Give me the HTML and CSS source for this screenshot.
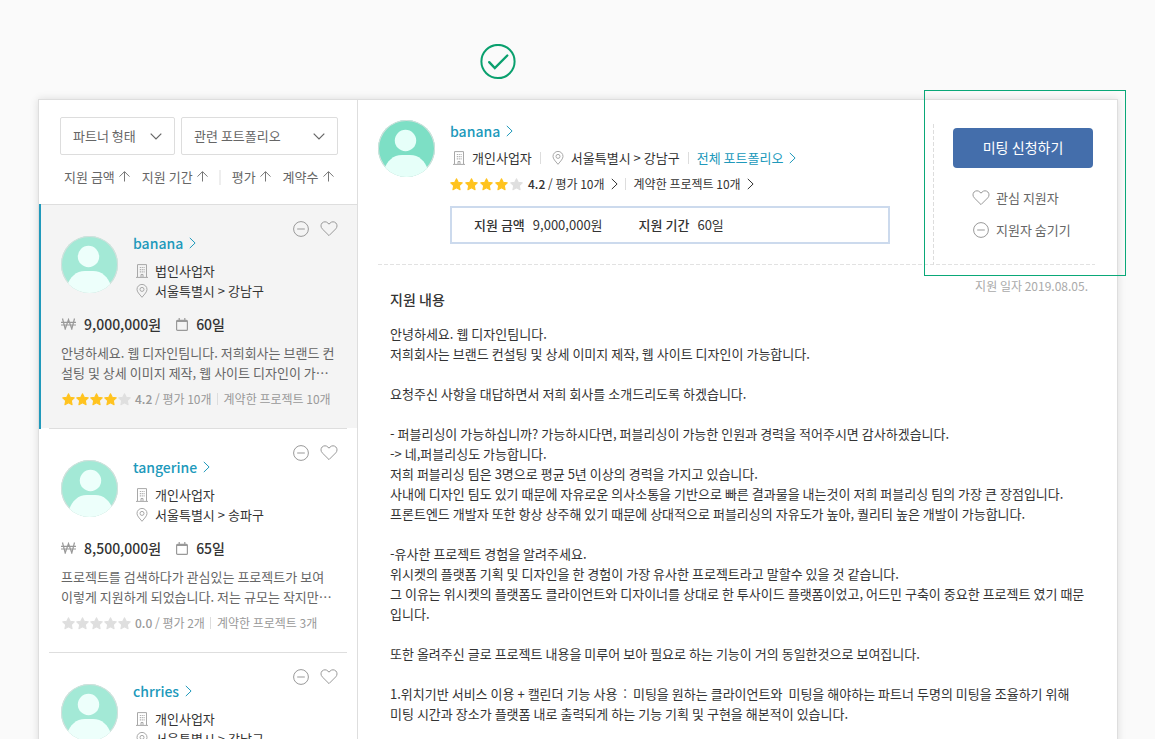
FILE: index.html
```html
<!DOCTYPE html>
<html lang="ko">
<head>
    <meta charset="UTF-8">
    <meta name="viewport" content="width=device-width, initial-scale=1.0">
    <title>지원자 목록</title>
    <link rel="stylesheet" href="styles.css">
</head>
<body>
    <!-- shared icons -->
    <svg class="sprite">
        <symbol id="heart" viewBox="0 0 18 16"><path d="M9 14.6 2.2 7.8C.6 6.100.6 3.600 2.100 2 3.700.4 6.300.4 7.900 2L9 3.200 10.100 2c1.600-1.600 4.200-1.600 5.800 0 1.500 1.600 1.500 4.100-.1 5.800z"/></symbol>
        <symbol id="minus" viewBox="0 0 16 16"><circle cx="8" cy="8" r="7.4"/><path d="M4.200 8h7.600"/></symbol>
        <symbol id="right" viewBox="0 0 7 12"><path d="M.8.900 6.100 6 .8 11.100"/></symbol>
        <symbol id="down" viewBox="0 0 12 7"><path d="M.7.700 6 6 11.300.7"/></symbol>
        <symbol id="up" viewBox="0 0 11 11"><path d="M5.500 10.500V.8M.5 5.600l5-5 5 5"/></symbol>
        <symbol id="building" viewBox="0 0 12 14"><path d="M1.500 13V.6h9V13M0 13.400h12M5 13v-2.500h2V13"/><path d="M3.800 3.500h4.800M3.800 5.700h4.800M3.800 7.900h4.800" stroke-dasharray="1.100 .8" stroke-width="1.200"/></symbol>
        <symbol id="pin" viewBox="0 0 12 14"><path d="M6 13.300C3.200 10 1 7.700 1 5.400a5 5 0 0 1 10 0c0 2.300-2.200 4.600-5 7.900z"/><circle cx="6" cy="5.400" r="2"/></symbol>
        <symbol id="won" viewBox="0 0 15 12"><path d="M1.500.5 4.200 11 7.500 1.500 10.800 11 13.500.5M0 4.300h15M0 7h15"/></symbol>
        <symbol id="calendar" viewBox="0 0 12 13"><rect x=".6" y="2.400" width="10.800" height="10" rx="1"/><path d="M.6 3.300h10.800M3.200 0v2.500M8.800 0v2.500"/></symbol>
        <symbol id="star" viewBox="0 0 12 12"><path d="M6 .7 7.600 4l3.700.5-2.700 2.600.7 3.700L6 9 2.700 10.800l.7-3.700L.7 4.500 4.400 4z"/></symbol>
        <symbol id="person" viewBox="0 0 57 57"><circle cx="27.500" cy="20.500" r="10.700"/><path d="M6 50c3-9 9-15 18-15h8c9 0 15 6 18 15v8H6z"/></symbol>
    </svg>

    <svg class="check" viewBox="0 0 36 36"><circle cx="18" cy="17.500" r="16.600"/><path d="M9.200 18.200l5.600 5.800L27.300 11.500"/></svg>

    <div class="panel">
        <div class="sidebar">
            <div class="filters">
                <div class="selects">
                    <div class="select">파트너 형태<svg class="icon down"><use href="#down"/></svg></div>
                    <div class="select wide">관련 포트폴리오<svg class="icon down"><use href="#down"/></svg></div>
                </div>
                <div class="sorts">
                    <span class="sort">지원 금액<svg class="icon up"><use href="#up"/></svg></span>
                    <span class="sort">지원 기간<svg class="icon up"><use href="#up"/></svg></span>
                    <i class="bar"></i>
                    <span class="sort">평가<svg class="icon up"><use href="#up"/></svg></span>
                    <span class="sort">계약수<svg class="icon up"><use href="#up"/></svg></span>
                </div>
            </div>

            <div class="card active">
                <div class="card-top">
                    <svg class="avatar"><use href="#person"/></svg>
                    <div class="info">
                        <div class="name">banana<svg class="icon right"><use href="#right"/></svg></div>
                        <div class="meta"><svg class="icon small"><use href="#building"/></svg>법인사업자</div>
                        <div class="meta"><svg class="icon small"><use href="#pin"/></svg>서울특별시 &gt; 강남구</div>
                    </div>
                    <div class="actions"><svg class="icon minus"><use href="#minus"/></svg><svg class="icon heart"><use href="#heart"/></svg></div>
                </div>
                <div class="offer"><svg class="icon won"><use href="#won"/></svg>9,000,000원<svg class="icon calendar"><use href="#calendar"/></svg>60일</div>
                <p class="summary">안녕하세요. 웹 디자인팀니다. 저희회사는 브랜드 컨<br>설팅 및 상세 이미지 제작, 웹 사이트 디자인이 가⋯</p>
                <div class="rating">
                    <span class="stars"><svg><use href="#star"/></svg><svg><use href="#star"/></svg><svg><use href="#star"/></svg><svg><use href="#star"/></svg><svg class="off"><use href="#star"/></svg></span>
                    <span><b>4.2</b> / 평가 10개</span><i class="bar"></i><span>계약한 프로젝트 10개</span>
                </div>
            </div>

            <div class="card">
                <div class="card-top">
                    <svg class="avatar shift"><use href="#person"/></svg>
                    <div class="info">
                        <div class="name">tangerine<svg class="icon right"><use href="#right"/></svg></div>
                        <div class="meta"><svg class="icon small"><use href="#building"/></svg>개인사업자</div>
                        <div class="meta"><svg class="icon small"><use href="#pin"/></svg>서울특별시 &gt; 송파구</div>
                    </div>
                    <div class="actions"><svg class="icon minus"><use href="#minus"/></svg><svg class="icon heart"><use href="#heart"/></svg></div>
                </div>
                <div class="offer"><svg class="icon won"><use href="#won"/></svg>8,500,000원<svg class="icon calendar"><use href="#calendar"/></svg>65일</div>
                <p class="summary">프로젝트를 검색하다가 관심있는 프로젝트가 보여<br>이렇게 지원하게 되었습니다. 저는 규모는 작지만⋯</p>
                <div class="rating">
                    <span class="stars"><svg class="off"><use href="#star"/></svg><svg class="off"><use href="#star"/></svg><svg class="off"><use href="#star"/></svg><svg class="off"><use href="#star"/></svg><svg class="off"><use href="#star"/></svg></span>
                    <span><b>0.0</b> / 평가 2개</span><i class="bar"></i><span>계약한 프로젝트 3개</span>
                </div>
            </div>

            <div class="card">
                <div class="card-top">
                    <svg class="avatar"><use href="#person"/></svg>
                    <div class="info">
                        <div class="name">chrries<svg class="icon right"><use href="#right"/></svg></div>
                        <div class="meta"><svg class="icon small"><use href="#building"/></svg>개인사업자</div>
                        <div class="meta"><svg class="icon small"><use href="#pin"/></svg>서울특별시 &gt; 강남구</div>
                    </div>
                    <div class="actions"><svg class="icon minus"><use href="#minus"/></svg><svg class="icon heart"><use href="#heart"/></svg></div>
                </div>
            </div>
        </div>

        <div class="detail">
            <div class="profile">
                <svg class="avatar"><use href="#person"/></svg>
                <div class="profile-info">
                    <div class="name">banana<svg class="icon right"><use href="#right"/></svg></div>
                    <div class="line">
                        <svg class="icon small"><use href="#building"/></svg><span>개인사업자</span><i class="bar"></i>
                        <svg class="icon small"><use href="#pin"/></svg><span>서울특별시 &gt; 강남구</span><i class="bar"></i>
                        <span class="link">전체 포트폴리오<svg class="icon right"><use href="#right"/></svg></span>
                    </div>
                    <div class="rating">
                        <span class="stars"><svg><use href="#star"/></svg><svg><use href="#star"/></svg><svg><use href="#star"/></svg><svg><use href="#star"/></svg><svg class="off"><use href="#star"/></svg></span>
                        <span><b>4.2</b> / 평가 10개<svg class="icon right"><use href="#right"/></svg></span><i class="bar"></i><span>계약한 프로젝트 10개<svg class="icon right"><use href="#right"/></svg></span>
                    </div>
                    <div class="terms"><b>지원 금액</b><span>9,000,000원</span><b>지원 기간</b><span>60일</span></div>
                </div>
                <div class="profile-actions">
                    <button type="button">미팅 신청하기</button>
                    <div class="action"><svg class="icon heart"><use href="#heart"/></svg>관심 지원자</div>
                    <div class="action"><svg class="icon minus"><use href="#minus"/></svg>지원자 숨기기</div>
                </div>
            </div>
            <div class="date">지원 일자 2019.08.05.</div>
            <h2>지원 내용</h2>
            <div class="content">안녕하세요. 웹 디자인팀니다.
저희회사는 브랜드 컨설팅 및 상세 이미지 제작, 웹 사이트 디자인이 가능합니다.

요청주신 사항을 대답하면서 저희 회사를 소개드리도록 하겠습니다.

- 퍼블리싱이 가능하십니까? 가능하시다면, 퍼블리싱이 가능한 인원과 경력을 적어주시면 감사하겠습니다.
-&gt; 네,퍼블리싱도 가능합니다.
저희 퍼블리싱 팀은 3명으로 평균 5년 이상의 경력을 가지고 있습니다.
사내에 디자인 팀도 있기 때문에 자유로운 의사소통을 기반으로 빠른 결과물을 내는것이 저희 퍼블리싱 팀의 가장 큰 장점입니다.
프론트엔드 개발자 또한 항상 상주해 있기 때문에 상대적으로 퍼블리싱의 자유도가 높아, 퀄리티 높은 개발이 가능합니다.

-유사한 프로젝트 경험을 알려주세요.
위시켓의 플랫폼 기획 및 디자인을 한 경험이 가장 유사한 프로젝트라고 말할수 있을 것 같습니다.
그 이유는 위시켓의 플랫폼도 클라이언트와 디자이너를 상대로 한 투사이드 플랫폼이었고, 어드민 구축이 중요한 프로젝트 였기 때문
입니다.

또한 올려주신 글로 프로젝트 내용을 미루어 보아 필요로 하는 기능이 거의 동일한것으로 보여집니다.

1.위치기반 서비스 이용 + 캘린더 기능 사용  :  미팅을 원하는 클라이언트와  미팅을 해야하는 파트너 두명의 미팅을 조율하기 위해
미팅 시간과 장소가 플랫폼 내로 출력되게 하는 기능 기획 및 구현을 해본적이 있습니다.</div>
        </div>
    </div>
    <div class="highlight"></div>
</body>
</html>
```
FILE: styles.css
```css
* {
    box-sizing: border-box;
}
body {
    margin: 0;
    height: 739px;
    overflow: hidden;
    background-color: #fafafa;
    color: #333;
    font-family: "Noto Sans CJK KR", sans-serif;
    font-size: 13px;
    line-height: 20px;
    word-spacing: -0.65px;
}
svg {
    display: block;
    flex: none;
}
b {
    font-weight: 500;
}
.sprite {
    position: absolute;
    width: 0;
    height: 0;
}
.check {
    width: 36px;
    height: 36px;
    margin: 44px 0 19px 480px;
    fill: none;
    stroke: #0aa06e;
    stroke-width: 2;
}
.check path {
    stroke-width: 2.4;
    stroke-linecap: round;
}
.panel {
    display: flex;
    width: 1080px;
    height: 660px;
    margin-left: 38px;
    background-color: #fff;
    border: 1px solid #dedede;
    box-shadow: 0 0 8px rgba(0, 0, 0, 0.12);
}

/* icons */
.icon {
    fill: none;
    stroke: #999;
    stroke-width: 1;
}
.down {
    width: 12px;
    height: 7px;
    stroke: #666;
    stroke-width: 1.2;
}
.up {
    width: 11px;
    height: 11px;
    margin: -2px 0 0 4px;
    stroke: #777;
}
.right {
    display: inline-block;
    width: 7px;
    height: 12px;
    margin-left: 6px;
    stroke: currentColor;
}
.small {
    width: 12px;
    height: 14px;
    stroke: #a8a8a8;
}
.minus {
    width: 16px;
    height: 16px;
}
.heart {
    width: 18px;
    height: 16px;
}
.won {
    width: 15px;
    height: 12px;
    margin-right: 8px;
    stroke-width: 1.2;
}
.calendar {
    width: 12px;
    height: 13px;
    margin: 0 8px 0 15px;
    stroke-width: 1.2;
}
.avatar {
    width: 57px;
    height: 57px;
    border-radius: 50%;
    background-color: #a3e9d6;
    box-shadow: inset 0 0 0 1px #d5dfdc;
    fill: #edfffb;
}
.shift use {
    transform: translateX(2px);
}
.bar {
    width: 1px;
    height: 12px;
    background-color: #ddd;
}

/* applicant list */
.sidebar {
    flex: none;
    width: 319px;
    border-right: 1px solid #dedede;
}
.filters {
    height: 105px;
    padding: 17px 19px 0 21px;
    border-bottom: 1px solid #dedede;
    color: #666;
}
.selects {
    display: flex;
    gap: 6px;
}
.select {
    display: flex;
    align-items: center;
    justify-content: space-between;
    width: 115px;
    height: 38px;
    padding: 0 12px;
    border: 1px solid #ddd;
    border-radius: 2px;
}
.wide {
    width: 157px;
}
.sorts {
    display: flex;
    align-items: center;
    margin: 12px -12px 0 4px;
    white-space: nowrap;
}
.sort {
    display: flex;
    align-items: center;
    margin-right: 12px;
}
.sorts .bar {
    width: 2px;
    height: 15px;
    margin: 0 11px 0 -1px;
    background-color: #eee;
}
.card {
    position: relative;
    height: 224px;
    padding: 16px 19px 0 22px;
}
.card::after {
    content: "";
    position: absolute;
    left: 10px;
    right: 10px;
    bottom: 0;
    height: 1px;
    background-color: #dedede;
}
.active {
    background: linear-gradient(#f4f4f4, #f4f4f4) no-repeat 0 0 / 100% 223px;
}
.active::before {
    content: "";
    position: absolute;
    top: -1px;
    left: 0;
    width: 2px;
    height: 225px;
    background-color: #2099bb;
}
.card-top {
    display: flex;
}
.card-top .avatar {
    margin: 15px 0 0 0;
}
.info {
    flex: 1;
    padding: 12px 0 0 15px;
}
.name {
    display: flex;
    align-items: center;
    margin-bottom: 8px;
    color: #2099bb;
    font-size: 14px;
    font-weight: 500;
}
.meta {
    display: flex;
    align-items: center;
    gap: 7px;
    padding-left: 3px;
}
.actions {
    display: flex;
    gap: 11px;
    margin-left: -50px;
}
.offer {
    display: flex;
    align-items: center;
    margin: 13px 0 9px;
    font-size: 14px;
    font-weight: 500;
}
.summary {
    margin: 0 0 6px;
    color: #666;
    white-space: nowrap;
}
.rating {
    display: flex;
    align-items: center;
    color: #999;
    font-size: 12px;
}
.stars {
    display: flex;
    gap: 1px;
    margin: 0 4px 0 1px;
    fill: #ffc31f;
    stroke: #ffc31f;
    stroke-linejoin: round;
}
.stars svg {
    width: 13px;
    height: 13px;
}
.stars .off {
    fill: #dfdfdf;
    stroke: #dfdfdf;
}
.rating .bar {
    margin: 0 6px 0 5px;
}

/* applicant detail */
.detail {
    flex: 1;
    padding: 20px 22px 0 20px;
}
.profile {
    display: flex;
    height: 145px;
    background: repeating-linear-gradient(90deg, #e2e2e2 0 4px, transparent 4px 6px) no-repeat bottom / 100% 1px;
}
.profile .avatar {
    background-color: #7ddfc5;
    fill: #e6fff9;
}
.profile-info {
    width: 440px;
    margin: 1px 43px 0 15px;
}
.profile-info .name {
    margin-bottom: 7px;
}
.line,
.line .link {
    display: flex;
    align-items: center;
}
.line .small {
    margin: 0 7px 0 3px;
}
.line .bar {
    margin: 0 8px;
}
.line .link {
    color: #2099bb;
}
.profile-info .rating {
    margin-top: 6px;
    color: #333;
}
.profile-info .stars {
    gap: 2px;
    margin: 0 5px 0 0;
}
.profile-info .rating span {
    display: flex;
    align-items: center;
    white-space: pre;
}
.profile-info .rating .bar {
    margin: 0 8px 0 7px;
}
.terms {
    display: flex;
    align-items: center;
    height: 38px;
    margin-top: 12px;
    padding-left: 22px;
    border: 2px solid #ccdaed;
}
.terms span {
    margin: 0 36px 0 8px;
}
.profile-actions {
    width: 162px;
    margin-top: 4px;
    padding: 4px 0 0 20px;
    background: repeating-linear-gradient(#ddd 0 4px, transparent 4px 6px) no-repeat left / 1px 100%;
}
button {
    width: 140px;
    height: 40px;
    margin-bottom: 20px;
    padding: 0 0 2px;
    border: none;
    border-radius: 4px;
    background-color: #446eab;
    color: #fff;
    font-family: inherit;
    font-size: 14px;
    word-spacing: -0.65px;
}
.action {
    display: flex;
    align-items: center;
    gap: 6px;
    margin-bottom: 12px;
    padding-left: 19px;
    color: #666;
}
.action .minus {
    margin: 0 1px;
}
.date {
    margin: 11px 7px 0 0;
    color: #aaa;
    font-size: 12px;
    text-align: right;
}
h2 {
    margin: -7px 0 15px 12px;
    font-size: 14px;
    font-weight: 500;
}
.content {
    margin-left: 12px;
    white-space: pre;
}

/* outline around the action area */
.highlight {
    position: absolute;
    top: 90px;
    left: 924px;
    width: 202px;
    height: 186px;
    border: 1px solid #0aa878;
}
```
